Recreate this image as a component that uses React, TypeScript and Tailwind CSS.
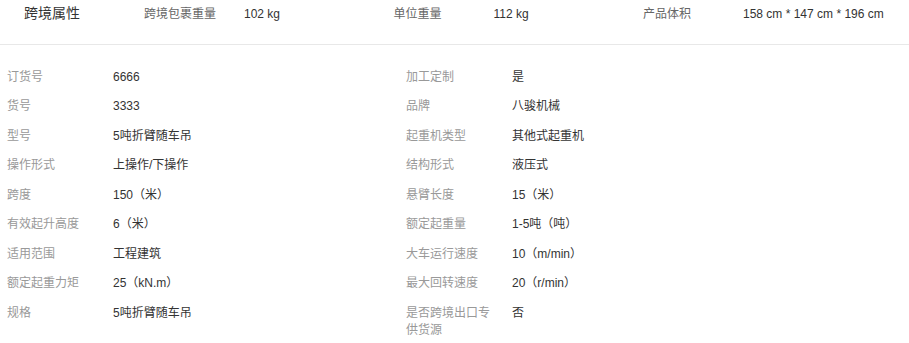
const headerItems = [
  { label: "跨境包裹重量", value: "102 kg" },
  { label: "单位重量", value: "112 kg" },
  { label: "产品体积", value: "158 cm * 147 cm * 196 cm" },
];

const left = [
  ["订货号", "6666"],
  ["货号", "3333"],
  ["型号", "5吨折臂随车吊"],
  ["操作形式", "上操作/下操作"],
  ["跨度", "150（米）"],
  ["有效起升高度", "6（米）"],
  ["适用范围", "工程建筑"],
  ["额定起重力矩", "25（kN.m）"],
  ["规格", "5吨折臂随车吊"],
];

const right = [
  ["加工定制", "是"],
  ["品牌", "八骏机械"],
  ["起重机类型", "其他式起重机"],
  ["结构形式", "液压式"],
  ["悬臂长度", "15（米）"],
  ["额定起重量", "1-5吨（吨）"],
  ["大车运行速度", "10（m/min）"],
  ["最大回转速度", "20（r/min）"],
  ["是否跨境出口专供货源", "否"],
];

function Row({ label, value }: { label: string; value: string }) {
  return (
    <div className="flex items-start py-[6px] text-[12px] leading-[17.5px]">
      <div className="w-[106px] shrink-0 pr-[14px] text-[#999]">{label}</div>
      <div className="text-[#333]">{value}</div>
    </div>
  );
}

export default function App() {
  return (
    <div
      className="w-[909px] h-[343px] bg-white overflow-hidden"
      style={{ fontFamily: '"Liberation Sans", Arial, "Noto Sans CJK SC", sans-serif' }}
    >
      {/* header */}
      <div className="flex items-start h-[45px] border-b border-[#e8e8e8] pt-[3px]">
        <div className="w-[144px] shrink-0 pl-[24px] text-[14px] leading-[20px] text-[#333]">跨境属性</div>
        {headerItems.map((h) => (
          <div key={h.label} className="flex w-[249.5px] shrink-0 text-[12px] leading-[20px] pt-[1px]">
            <div className="w-[100px] shrink-0 text-[#666]">{h.label}</div>
            <div className="text-[#333]">{h.value}</div>
          </div>
        ))}
      </div>

      {/* attributes */}
      <div className="grid grid-cols-[399px_399px] pl-[7px] pt-[17.5px]">
        <div className="flex flex-col">
          {left.map(([l, v]) => (
            <Row key={l} label={l} value={v} />
          ))}
        </div>
        <div className="flex flex-col">
          {right.map(([l, v]) => (
            <Row key={l} label={l} value={v} />
          ))}
        </div>
      </div>
    </div>
  );
}
